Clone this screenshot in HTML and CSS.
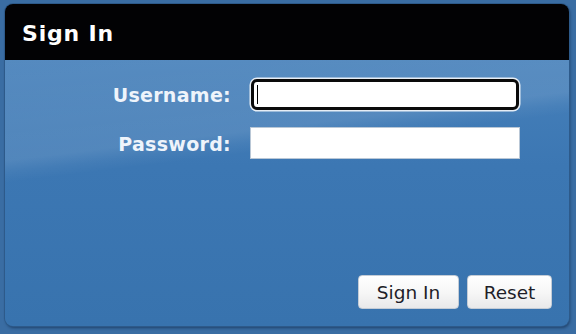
FILE: index.html
```html
<!DOCTYPE html>
<html lang="en">
<head>
<meta charset="utf-8">
<title>Sign In</title>
<link rel="stylesheet" href="styles.css">
</head>
<body>
<div class="panel">
  <div class="panel-header">
    <h1 class="panel-title">Sign In</h1>
  </div>
  <form class="panel-body" onsubmit="return false">
    <div class="fields">
      <label class="field-label" for="username">Username:</label>
      <span class="input-wrap">
        <input class="text-input is-focused" id="username" type="text">
        <span class="caret"></span>
      </span>
      <label class="field-label" for="password">Password:</label>
      <span class="input-wrap">
        <input class="text-input" id="password" type="password">
      </span>
    </div>
    <div class="actions">
      <button class="btn btn-signin" type="submit">Sign In</button>
      <button class="btn btn-reset" type="reset">Reset</button>
    </div>
  </form>
</div>
</body>
</html>
```
FILE: styles.css
```css
html, body {
  margin: 0;
  height: 100%;
}
body {
  background: #3a6da3;
  padding: 4px 7px 8px 5px;
  box-sizing: border-box;
  font-family: "DejaVu Sans", Verdana, sans-serif;
}
.panel {
  height: 322px;
  display: flex;
  flex-direction: column;
  border-radius: 8px;
  box-shadow: 0 0 0 1px #2d5a8a, 1px 2px 3px rgba(10, 30, 60, 0.55);
  overflow: hidden;
}
.panel-header {
  height: 56px;
  background: #020204;
  display: flex;
  align-items: center;
  padding-left: 17px;
  flex: none;
}
.panel-title {
  margin: 0;
  color: #ffffff;
  font-size: 22px;
  font-weight: bold;
  letter-spacing: 0.8px;
  padding-top: 3px;
}
.panel-body {
  flex: 1;
  margin: 0;
  display: flex;
  flex-direction: column;
  background:
    linear-gradient(173deg, rgba(255,255,255,0.08) 0px, rgba(255,255,255,0.11) 100px, rgba(255,255,255,0.04) 112px, rgba(255,255,255,0) 122px),
    linear-gradient(180deg, #4680ba 0%, #3c77b3 40%, #3873ae 100%);
}
.fields {
  display: grid;
  grid-template-columns: 226px 270px;
  column-gap: 19px;
  row-gap: 17px;
  align-items: center;
  margin-top: 18px;
}
.field-label {
  justify-self: end;
  color: #eef4fb;
  font-size: 19px;
  font-weight: bold;
  letter-spacing: 0.3px;
  padding-top: 2px;
}
.input-wrap {
  position: relative;
  display: block;
  height: 32px;
}
.text-input {
  box-sizing: border-box;
  width: 270px;
  height: 32px;
  margin: 0;
  border: 1px solid #b9c7d6;
  background: #ffffff;
  outline: none;
  font: 16px "DejaVu Sans", sans-serif;
}
.text-input.is-focused {
  width: 268px;
  height: 31px;
  margin: 1px;
  border: 3px solid #0a0a0a;
  border-radius: 6px;
  box-shadow: 0 0 0 1.5px #e6edf5;
}
.caret {
  position: absolute;
  left: 7px;
  top: 7px;
  width: 1px;
  height: 19px;
  background: #000;
}
.actions {
  margin-top: auto;
  display: flex;
  justify-content: flex-end;
  gap: 8px;
  padding: 0 17px 17px 0;
}
.btn {
  height: 34px;
  margin: 0;
  padding: 0;
  border: 1px solid #c4ccd6;
  border-radius: 4px;
  background: linear-gradient(180deg, #ffffff 0%, #f7f7f7 50%, #e9e9ea 100%);
  color: #1e1e28;
  font: 18.5px "DejaVu Sans", Verdana, sans-serif;
  padding-top: 1px;
}
.btn-signin { width: 101px; }
.btn-reset { width: 85px; }
```
